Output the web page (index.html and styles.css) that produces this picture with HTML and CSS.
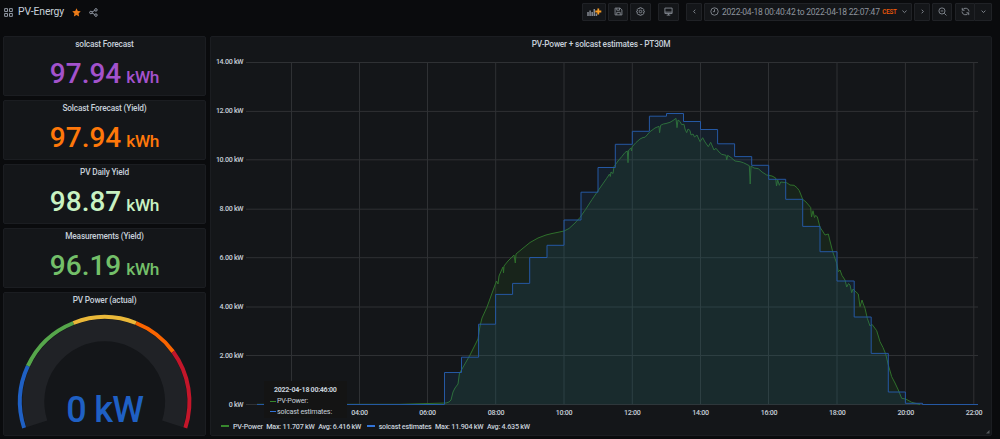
FILE: index.html
```html
<!DOCTYPE html>
<html lang="en">
<head>
    <meta charset="UTF-8">
    <meta name="viewport" content="width=device-width, initial-scale=1.0">
    <title>PV-Energy</title>
    <link rel="stylesheet" href="styles.css">
</head>
<body>
    <header class="navbar">
        <svg class="icon apps" viewBox="0 0 10 10"><path d="M.7.7h3.2v3.2H.7zM6.1.7h3.2v3.2H6.1zM.7 6.1h3.2v3.2H.7zM6.1 6.1h3.2v3.2H6.1z"/></svg>
        <h1>PV-Energy</h1>
        <svg class="star" viewBox="0 0 10 10"><path d="M5 .3l1.4 3 3.3.4-2.4 2.3.6 3.4L5 7.8 2.1 9.4l.6-3.4L.3 3.7l3.3-.4z"/></svg>
        <svg class="icon share" viewBox="0 0 10 10"><circle cx="2.1" cy="5" r="1.4"/><circle cx="7.7" cy="2.1" r="1.4"/><circle cx="7.7" cy="7.9" r="1.4"/><path d="M3.4 4.4l3-1.6M3.4 5.6l3 1.6"/></svg>
        <div class="tools">
            <button class="btn add"><svg viewBox="0 0 16 10"><path class="bars" d="M2 5v4M4.1 3.5V9M6.2 5v4M8.3 2v7M10.4 6.5V9"/><path class="plus" d="M12.3 1.5v6M9.3 4.5h6"/></svg></button>
            <button class="btn save"><svg viewBox="0 0 10 10"><path d="M1.2 1.2h5.6l2 2v5.6H1.2zM3.1 1.2v2.4h3V1.2M3.1 8.8V5.9h3.8v2.9"/></svg></button>
            <button class="btn gear"><svg viewBox="0 0 10 10"><path d="M4 .8h2l.3 1.2 1.2-.5 1.1 1.2-.6 1.1 1.2.5v1.6l-1.2.4.6 1.2-1.1 1.1-1.2-.5L6 9.2H4l-.4-1.1-1.2.5-1-1.1L2 6.3.8 5.9V4.3L2 3.8l-.6-1.1 1-1.2L3.7 2z"/><circle cx="5" cy="5" r="1.4"/></svg></button>
            <button class="btn monitor"><svg viewBox="0 0 10 10"><path d="M1 1.2h8v6H1zM1 5.7h8M3 9h4M5 7.2V9"/></svg></button>
            <button class="btn prev"><svg viewBox="0 0 10 10"><path d="M5.9 3L4 5l1.9 2"/></svg></button>
            <button class="btn time">
                <svg viewBox="0 0 10 10"><circle cx="5" cy="5" r="4.1"/><path d="M5 2.5V5.2H3.3"/></svg>
                <span>2022-04-18 00:40:42 to 2022-04-18 22:07:47</span>
                <em>CEST</em>
                <svg class="caret" viewBox="0 0 10 10"><path d="M2.7 4L5 6.2 7.3 4"/></svg>
            </button>
            <button class="btn next"><svg viewBox="0 0 10 10"><path d="M4.1 3L6 5 4.1 7"/></svg></button>
            <button class="btn zoom-out"><svg viewBox="0 0 10 10"><circle cx="4.4" cy="4.4" r="3.4"/><path d="M7 7l2.4 2.4M3 4.4h2.8"/></svg></button>
            <button class="btn refresh"><svg viewBox="0 0 10 10"><path d="M1.4 1v2.6H4M1.5 3.4A4 4 0 0 1 9 5M8.6 9V6.4H6M8.5 6.6A4 4 0 0 1 1 5"/></svg></button>
            <button class="btn interval"><svg viewBox="0 0 10 10"><path d="M2.9 4L5 6.2 7.1 4"/></svg></button>
        </div>
    </header>

    <main class="dashboard">
        <div class="stats">
            <section class="panel stat purple">
                <h2>solcast Forecast</h2>
                <p>97.94 <small>kWh</small></p>
            </section>
            <section class="panel stat orange">
                <h2>Solcast Forecast (Yield)</h2>
                <p>97.94 <small>kWh</small></p>
            </section>
            <section class="panel stat light-green">
                <h2>PV Daily Yield</h2>
                <p>98.87 <small>kWh</small></p>
            </section>
            <section class="panel stat green">
                <h2>Measurements (Yield)</h2>
                <p>96.19 <small>kWh</small></p>
            </section>
            <section class="panel gauge">
                <h2>PV Power (actual)</h2>
                <svg viewBox="4 308 201 127">
                    <path class="track" d="M36.8 423.8A71.4 71.4 0 1 1 172.6 423.8"/>
                    <path class="blue" d="M24.1 427.9A84.7 84.7 0 0 1 27.9 365.9"/>
                    <path class="green" d="M27.9 365.9A84.7 84.7 0 0 1 73.4 323"/>
                    <path class="yellow" d="M73.4 323A84.7 84.7 0 0 1 136 323"/>
                    <path class="orange" d="M136 323A84.7 84.7 0 0 1 173.1 351.7"/>
                    <path class="red" d="M173.1 351.7A84.7 84.7 0 0 1 185.3 427.9"/>
                    <text x="104.7" y="422.3">0 kW</text>
                </svg>
            </section>
        </div>

        <section class="panel graph">
            <h2>PV-Power + solcast estimates - PT30M</h2>
            <svg class="plot" viewBox="211 52 780 367">
                <path class="grid" d="M246 62.5H978M246 111.4H978M246 159.8H978M246 209.2H978M246 257.7H978M246 307H978M246 355.5H978M246 404.5H978"/>
                <path class="grid" d="M291.5 62V404M359.5 62V404M427.5 62V404M495.7 62V404M564 62V404M632.3 62V404M700.5 62V404M768.5 62V404M837 62V404M905.4 62V404M973.8 62V404"/>
                <g class="labels y">
                    <text x="243.3" y="64">14.00 kW</text>
                    <text x="243.3" y="113">12.00 kW</text>
                    <text x="243.3" y="162">10.00 kW</text>
                    <text x="243.3" y="211">8.00 kW</text>
                    <text x="243.3" y="260">6.00 kW</text>
                    <text x="243.3" y="309">4.00 kW</text>
                    <text x="243.3" y="358">2.00 kW</text>
                    <text x="243.3" y="407">0 kW</text>
                </g>
                <g class="labels x">
                    <text x="359.5" y="415">04:00</text>
                    <text x="427.5" y="415">06:00</text>
                    <text x="496" y="415">08:00</text>
                    <text x="564" y="415">10:00</text>
                    <text x="632.3" y="415">12:00</text>
                    <text x="700.5" y="415">14:00</text>
                    <text x="769" y="415">16:00</text>
                    <text x="837.3" y="415">18:00</text>
                    <text x="905.7" y="415">20:00</text>
                    <text x="974" y="415">22:00</text>
                </g>
                <!-- measured power -->
                <path class="power" d="M257 404.3L400 404.3 446 403 449 402 451 400 453 392 455 388 458 384 459.5 373 462 369 466 362 470 355 475 345 478 339 480 326 482 318 487 307 491 296 495 285 496.5 281 498 284 499 276 502 269 503 267 503.5 273 504 266 508 261 514 255 515.3 263 516 254 522 249 530 242.5 538 238 546 235 552 233.5 558 232.3 564 231 569 228.5 575 223 580 217.5 585.7 209.3 592 199.5 596.7 192.7 602 185 606.7 178.3 609.5 174 610.3 176.5 611 172 613 173.5 614 166.7 618 161 621.7 156.7 625 152.5 627.3 151 628 162.7 628.7 150 631 148 631.5 151 632 147 636 142.5 640 139 643 137.5 645 137.3 650 131.7 655 128 659 126.3 659.6 132.7 660.6 125.3 663.3 124 666 123.5 670 122.3 673 120.5 676 118.3 677 127.7 678 120 680 121.5 681.7 124.7 684 124.3 685 129 686.7 132.7 688 129 690 130.5 691 135 693 134 694.5 137 697 135 700 141.7 702.7 137.7 705 142 708.3 146.7 710.7 142.3 714 150 716 148.3 719 152 721.7 154.3 726 155.3 726.7 160 727.7 155.3 731 157.5 735 161 740 161.7 743.3 162.7 746 164 749.3 165.7 750.2 184 751 166 754 168 758.3 168.7 762 172 766.7 175 772 176 775.7 178 776.5 186 777.7 180 779.3 185.3 780.7 182 786.7 182.7 790 185 794 185.3 797 187.7 799.3 190.7 802.7 199.3 806 202 810.7 207.5 811.5 217 813 210.7 814.5 217.5 815.5 215.5 817.3 216.7 820 227.3 822.5 231 825 235 828.3 234 830 241 832.7 251.7 836.7 263.3 838.3 271.7 840 270 842 275.5 845 280 846.7 287 848.5 283.5 850 285 851.7 292.7 853 289 856 292 858.3 294 860 306.7 862 300 863.3 304 865 308.3 867.3 318.3 870 326 872 324.3 876.7 330.7 880 341.7 883 347.5 885.7 354 888.3 365 891.7 376.7 895 383 898.3 390 901.7 398.3 905.7 399 911.7 402.3 920 404.5"/>
                <!-- half-hour forecast -->
                <path class="forecast" d="M257 404.5H444.5V372.5H461.5V357.2H478.6V324.2H495.6V294.4H512.6V283.4H529.7V257.5H547V245.3H564V220H581V192.2H598V167.5H615.3V144.3H632.3V131.3H649.4V116.2H666.5V113.5H683.5V121.5H700.5V129.5H717.6V143.8H734.6V156.6H751.7V165.3H768.7V179.3H785.7V199.3H802.7V226.4H820V251.7H837V281H854.2V317H871.2V353.4H888.3V392H905.4V403.3H922.5V404.5H978"/>
            </svg>
            <div class="tooltip">
                <b>2022-04-18 00:46:00</b>
                <span><i class="line green"></i>PV-Power:</span>
                <span><i class="line blue"></i>solcast estimates:</span>
            </div>
            <div class="legend">
                <i class="line green"></i>
                <span class="name">PV-Power</span>
                <span>Max: 11.707 kW</span>
                <span>Avg: 6.416 kW</span>
                <i class="line blue"></i>
                <span class="name">solcast estimates</span>
                <span>Max: 11.904 kW</span>
                <span>Avg: 4.635 kW</span>
            </div>
            <svg class="resize" viewBox="0 0 4 4"><path d="M3.5 0v3.5H0z"/></svg>
        </section>
    </main>
</body>
</html>
```
FILE: styles.css
```css
*{box-sizing: border-box;}
body{
    margin: 0;
    height: 439px;
    overflow: hidden;
    background: #0a0b0d;
    color: #c7d0d9;
    font-family: Roboto, sans-serif;
}
h1, h2, p{
    margin: 0;
}
svg{
    display: block;
    flex: none;
}
.navbar{
    display: flex;
    align-items: center;
    height: 36px;
    padding: 0 8px 12px 4px;
}
.navbar h1{
    margin-left: 5px;
    width: 46px;
    font-size: 10.4px;
    font-weight: 400;
    line-height: 14px;
    letter-spacing: -.12px;
    white-space: nowrap;
}
.icon{
    width: 9px;
    height: 9px;
    fill: none;
    stroke: #9fa7b3;
    stroke-width: 1;
}
.star{
    width: 9px;
    height: 9px;
    margin-left: 8px;
    fill: #eb7b18;
}
.share{
    margin-left: 8px;
}
.tools{
    display: flex;
    margin-left: auto;
}
.btn{
    display: flex;
    align-items: center;
    justify-content: center;
    width: 20px;
    height: 18px;
    margin: 0 0 0 2px;
    padding: 0 0 1px;
    border: 1px solid #202226;
    border-radius: 1px;
    background: #141619;
    color: #8e949d;
    font-family: inherit;
}
.btn svg{
    width: 9px;
    height: 9px;
    fill: none;
    stroke: #858a92;
    stroke-width: 1;
}
.btn.add{width: 24px;}
.btn.add svg{
    width: 16px;
    height: 10px;
}
.btn.add .bars{stroke-width: 1.5;}
.btn.add .plus{
    stroke: #f59a23;
    stroke-width: 1.8;
}
.btn.gear{width: 21px;}
.btn.monitor{
    width: 21px;
    margin-left: 7px;
}
.btn.prev{
    width: 16px;
    margin-left: 7px;
}
.btn.time{
    width: 208px;
    justify-content: flex-start;
    padding-left: 5px;
    font-size: 8.5px;
    letter-spacing: -.23px;
    white-space: nowrap;
}
.time span{
    width: 157px;
    margin-left: 3px;
}
.time em{
    width: 17px;
    margin-left: 2px;
    color: #f05a0a;
    font-size: 6.3px;
    font-style: normal;
    font-weight: 500;
}
.btn .caret{margin-left: 2px;}
.btn.next{width: 16px;}
.btn.refresh{margin-left: 3px;}
.btn.interval{
    width: 18px;
    margin-left: -1px;
}
.dashboard{
    display: flex;
    gap: 4px;
    padding-left: 3px;
}
.stats{
    display: flex;
    flex-direction: column;
    gap: 4px;
    width: 203px;
}
.panel{
    border: 1px solid #1b1d21;
    border-radius: 2px;
    background: #141619;
}
.panel h2{
    height: 15px;
    font-size: 8.3px;
    font-weight: 500;
    line-height: 15px;
    letter-spacing: -.18px;
    text-align: center;
}
.stat{
    height: 60px;
}
.stat p{
    height: 43px;
    font-size: 28px;
    font-weight: 500;
    line-height: 44px;
    text-align: center;
    white-space: nowrap;
    word-spacing: -2px;
}
.stat small{
    font-size: 17.3px;
    letter-spacing: -.3px;
}
.purple p{color: #a352cc;}
.orange p{color: #ff780a;}
.light-green p{color: #c8f2c2;}
.green p{color: #73bf69;}
.gauge{
    height: 144px;
}
.gauge svg{
    width: 201px;
    height: 127px;
    fill: none;
    stroke-width: 4;
}
.gauge .track{
    stroke: #202226;
    stroke-width: 22;
}
.gauge .blue{stroke: #1f60c4;}
.gauge .green{stroke: #56a64b;}
.gauge .yellow{stroke: #eab839;}
.gauge .orange{stroke: #fa6400;}
.gauge .red{stroke: #c4162a;}
.gauge text{
    fill: #1f60c4;
    font-size: 36px;
    font-weight: 500;
    letter-spacing: -.8px;
    text-anchor: middle;
}
.graph{
    position: relative;
    width: 782px;
    height: 400px;
}
.plot{
    width: 780px;
    height: 367px;
    fill: none;
}
.grid{
    stroke: #2f3134;
}
.labels{
    fill: #c7d0d9;
    font-size: 7.1px;
    font-weight: 500;
    letter-spacing: -.3px;
}
.labels.y{text-anchor: end;}
.labels.x{text-anchor: middle;}
.power{
    fill: rgba(55, 135, 45, .13);
    stroke: #2f702b;
}
.forecast{
    fill: rgba(31, 96, 180, .12);
    stroke: #2558a3;
}
.line{
    display: inline-block;
    width: 8px;
    height: 2px;
    background: #37872d;
}
.line.blue{background: #3274d9;}
.tooltip{
    position: absolute;
    left: 53px;
    top: 344px;
    width: 83px;
    height: 37px;
    padding: 4px 6px;
    background: #141414;
    font-size: 7.2px;
    line-height: 10.3px;
    letter-spacing: -.2px;
    white-space: nowrap;
}
.tooltip b{
    display: block;
    padding-left: 4px;
    padding-bottom: 1px;
    font-size: 7.1px;
    font-weight: 700;
    letter-spacing: -.3px;
}
.tooltip span{
    display: flex;
    align-items: center;
}
.tooltip .line{
    width: 6px;
    height: 1px;
    margin-right: 1px;
}
.legend{
    display: flex;
    align-items: center;
    height: 14px;
    padding-left: 10px;
    font-size: 7.2px;
    font-weight: 500;
    letter-spacing: -.24px;
    white-space: nowrap;
}
.legend span{margin-right: 3.5px;}
.legend .line{margin-left: 2px;}
.legend .line.green{margin-left: 0;}
.legend .name{margin-left: 4px;}
.resize{
    position: absolute;
    right: 1px;
    bottom: 1px;
    width: 4px;
    height: 4px;
    fill: #55585c;
}
```
